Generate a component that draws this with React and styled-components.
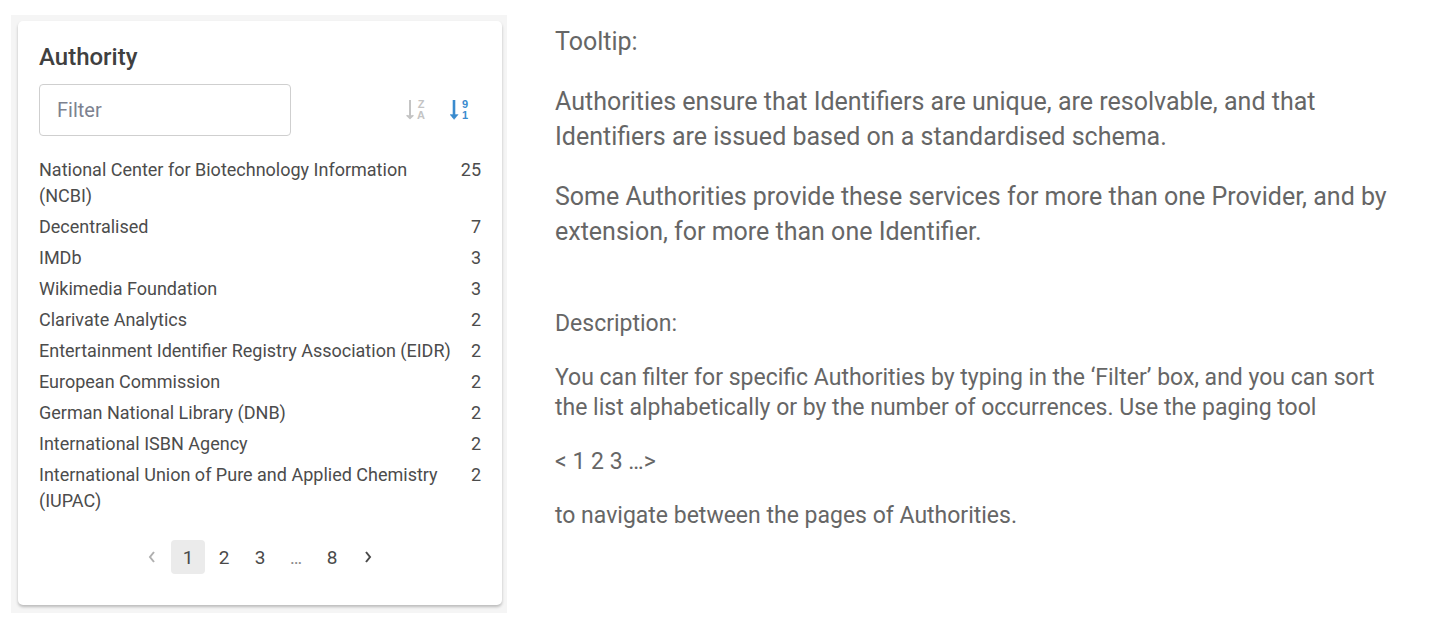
import React, { useState } from 'react';
import styled, { createGlobalStyle } from 'styled-components';

const GlobalStyle = createGlobalStyle`
  *, *::before, *::after { box-sizing: border-box; }
  body { margin: 0; background: #fff; font-family: Roboto, "Liberation Sans", sans-serif; }
`;

const Page = styled.main`
  display: flex;
  align-items: flex-start;
  gap: 48px;
  padding: 15px 40px 10px 11px;
`;

const Panel = styled.section`
  flex: 0 0 496px;
  padding: 6px 5px 8px 7px;
  background: #f5f5f5;
`;

const Card = styled.div`
  display: flex;
  flex-direction: column;
  padding: 20px 21px 31px;
  background: #fff;
  border-radius: 5px;
  box-shadow: 0 2px 3px rgba(0, 0, 0, 0.24);
  color: #4c4c4c;
`;

const Title = styled.h2`
  margin: 0 0 10px;
  font-size: 24px;
  line-height: 33px;
  font-weight: 500;
  color: #404040;
`;

const Toolbar = styled.div`
  display: flex;
  align-items: center;
  justify-content: space-between;
  margin-bottom: 21px;
`;

const FilterInput = styled.input`
  width: 252px;
  height: 52px;
  padding: 0 17px;
  border: 1px solid #cfcfcf;
  border-radius: 4px;
  background: #fff;
  font: 400 20px Roboto, "Liberation Sans", sans-serif;
  color: #4a4a4a;
  &::placeholder { color: #7d8290; opacity: 1; }
`;

const SortGroup = styled.div`
  display: flex;
  gap: 24px;
  padding-right: 11px;
`;

const SortButton = styled.button`
  display: flex;
  padding: 0;
  border: 0;
  background: none;
  cursor: pointer;
  color: ${(p) => (p.$active ? '#3a8bce' : '#c4c4c4')};
`;

const SortGlyph = styled.text`
  font: 700 11px "Liberation Sans", sans-serif;
  text-anchor: middle;
  fill: currentColor;
`;

const List = styled.ul`
  display: grid;
  gap: 5px;
  margin: 0 0 26px;
  padding: 0;
  list-style: none;
`;

const Row = styled.li`
  display: flex;
  justify-content: space-between;
  gap: 6px;
  font-size: 18px;
  line-height: 26px;
`;

const Pagination = styled.nav`
  display: flex;
  justify-content: center;
  align-items: center;
  gap: 2px;
`;

const PageButton = styled.button`
  display: grid;
  place-items: center;
  width: 34px;
  height: 34px;
  padding: 0;
  border: 0;
  border-radius: 4px;
  background: ${(p) => (p.$current ? '#ebebeb' : 'transparent')};
  color: ${(p) => (p.disabled ? '#b0b0b0' : '#4a4a4a')};
  font: 400 19px Roboto, "Liberation Sans", sans-serif;
`;

const Ellipsis = styled.span`
  width: 34px;
  text-align: center;
  font-size: 18px;
  color: #8a8a8a;
`;

const Notes = styled.article`
  flex: 1;
  min-width: 0;
  display: grid;
  gap: 60px;
  padding-top: 9px;
  color: #666;
`;

const NoteSection = styled.section`
  display: grid;
  gap: ${(p) => (p.$compact ? '24px' : '25px')};
  font-size: ${(p) => (p.$compact ? '23px' : '25px')};
  line-height: ${(p) => (p.$compact ? '30px' : '35px')};
`;

const Paragraph = styled.p`
  margin: 0;
`;

const authorities = [
  ['National Center for Biotechnology Information (NCBI)', 25],
  ['Decentralised', 7],
  ['IMDb', 3],
  ['Wikimedia Foundation', 3],
  ['Clarivate Analytics', 2],
  ['Entertainment Identifier Registry Association (EIDR)', 2],
  ['European Commission', 2],
  ['German National Library (DNB)', 2],
  ['International ISBN Agency', 2],
  ['International Union of Pure and Applied Chemistry (IUPAC)', 2],
];

const Chevron = ({ d }) => (
  <svg width="8" height="12" viewBox="0 0 8 12" fill="none" stroke="currentColor" strokeWidth="2" aria-hidden="true">
    <path d={d} />
  </svg>
);

const SortIcon = ({ top, bottom, bold }) => (
  <svg width="20" height="22" viewBox="0 0 20 22" aria-hidden="true">
    <path d="M4 1v18" stroke="currentColor" strokeWidth={bold ? 2.6 : 2} fill="none" />
    <path
      d={bold ? 'M0 15.6h8.2L4.1 20.4Z' : 'M.6 16.2 4 19.4l3.4-3.2'}
      fill="currentColor"
      stroke="currentColor"
      strokeWidth={bold ? 0.4 : 1.4}
      strokeLinejoin="round"
    />
    <SortGlyph x="15" y="9">{top}</SortGlyph>
    <SortGlyph x="15" y="20">{bottom}</SortGlyph>
  </svg>
);

export default function App() {
  const [sort, setSort] = useState('count');
  const [page, setPage] = useState(1);
  return (
    <>
      <GlobalStyle />
      <Page>
        <Panel>
          <Card>
            <Title>Authority</Title>
            <Toolbar>
              <FilterInput type="text" placeholder="Filter" aria-label="Filter" />
              <SortGroup>
                <SortButton aria-label="Sort alphabetically" $active={sort === 'name'} onClick={() => setSort('name')}>
                  <SortIcon top="Z" bottom="A" bold={sort === 'name'} />
                </SortButton>
                <SortButton aria-label="Sort by occurrences" $active={sort === 'count'} onClick={() => setSort('count')}>
                  <SortIcon top="9" bottom="1" bold={sort === 'count'} />
                </SortButton>
              </SortGroup>
            </Toolbar>
            <List>
              {authorities.map(([name, count]) => (
                <Row key={name}>
                  <span>{name}</span>
                  <span>{count}</span>
                </Row>
              ))}
            </List>
            <Pagination aria-label="Pages">
              <PageButton aria-label="Previous page" disabled={page === 1} onClick={() => setPage(page - 1)}>
                <Chevron d="M6 1 2 6l4 5" />
              </PageButton>
              {[1, 2, 3].map((n) => (
                <PageButton key={n} $current={page === n} onClick={() => setPage(n)}>{n}</PageButton>
              ))}
              <Ellipsis>…</Ellipsis>
              <PageButton $current={page === 8} onClick={() => setPage(8)}>8</PageButton>
              <PageButton aria-label="Next page" disabled={page === 8} onClick={() => setPage(page + 1)}>
                <Chevron d="m2 1 4 5-4 5" />
              </PageButton>
            </Pagination>
          </Card>
        </Panel>
        <Notes>
          <NoteSection>
            <Paragraph>Tooltip:</Paragraph>
            <Paragraph>
              Authorities ensure that Identifiers are unique, are resolvable, and that Identifiers are issued based on a
              standardised schema.
            </Paragraph>
            <Paragraph>
              Some Authorities provide these services for more than one Provider, and by extension, for more than one
              Identifier.
            </Paragraph>
          </NoteSection>
          <NoteSection $compact>
            <Paragraph>Description:</Paragraph>
            <Paragraph>
              You can filter for specific Authorities by typing in the ‘Filter’ box, and you can sort the list
              alphabetically or by the number of occurrences. Use the paging tool
            </Paragraph>
            <Paragraph>&lt; 1 2 3 …&gt;</Paragraph>
            <Paragraph>to navigate between the pages of Authorities.</Paragraph>
          </NoteSection>
        </Notes>
      </Page>
    </>
  );
}
